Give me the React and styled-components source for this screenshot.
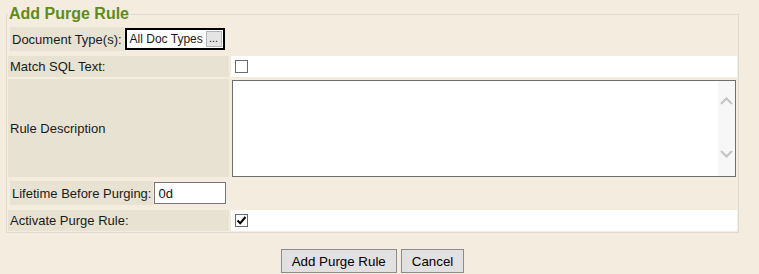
import React from "react";
import styled, { createGlobalStyle } from "styled-components";

const GlobalStyle = createGlobalStyle`
  html, body {
    margin: 0;
    padding: 0;
    background: #f4eddf;
  }
  body {
    font-family: "Liberation Sans", Arial, sans-serif;
    font-size: 13px;
    color: #1a1a1a;
  }
`;

const Page = styled.div`
  width: 759px;
  height: 274px;
  overflow: hidden;
`;

const Fieldset = styled.fieldset`
  margin: 5px 20px 0 6px;
  padding: 2px 1px 1px 1px;
  border: 1px solid #dedad2;
  min-width: 0;
`;

const Legend = styled.legend`
  padding: 0 1px;
  margin: 0;
  font-family: "Liberation Sans", Arial, sans-serif;
  font-weight: bold;
  font-size: 16px;
  line-height: 18px;
  color: #5e8b1e;
`;

const FormGrid = styled.div`
  display: grid;
  grid-template-columns: 221px 506px;
  column-gap: 2px;
  row-gap: 2px;
`;

const NestedRow = styled.div`
  grid-column: 1 / span 2;
  display: flex;
  align-items: center;
  gap: 1px;
  padding: 2px 2px 3px 2px;
`;

const LabelCell = styled.div`
  display: flex;
  align-items: center;
  padding: 0 2px;
  background: #e8e2d3;
  height: ${(p) => p.$h}px;
  white-space: nowrap;
`;

const ValueCell = styled.div`
  display: flex;
  align-items: center;
  background: ${(p) => (p.$white ? "#ffffff" : "transparent")};
  padding: ${(p) => p.$pad || "0"};
  height: ${(p) => p.$h}px;
  box-sizing: border-box;
`;

const PickerBox = styled.div`
  display: flex;
  align-items: center;
  justify-content: space-between;
  width: 100px;
  height: 22px;
  box-sizing: border-box;
  border: 2px solid #000;
  background: #fff;
  padding: 0 1px 0 3px;
  font-size: 12px;
  white-space: nowrap;
`;

const SmallButton = styled.button`
  width: 16px;
  height: 16px;
  padding: 0 0 3px 0;
  margin: 0;
  border: 1px solid #b4b4b4;
  background: #e4e4e4;
  font-family: "Liberation Sans", Arial, sans-serif;
  font-size: 11px;
  line-height: 10px;
  color: #111;
  display: flex;
  align-items: flex-end;
  justify-content: center;
  box-sizing: border-box;
  flex-shrink: 0;
`;

const TextInput = styled.input`
  width: 72px;
  height: 22px;
  box-sizing: border-box;
  border: 1px solid #767676;
  padding: 0 3px;
  margin: 0;
  font-family: "Liberation Sans", Arial, sans-serif;
  font-size: 13px;
  color: #111;
  background: #fff;
  outline: none;
`;

const CheckWrap = styled.label`
  display: inline-flex;
  margin-left: 4px;
  width: 13px;
  height: 13px;
  box-sizing: border-box;
  border: 1px solid #6b6b6b;
  background: #fff;
  align-items: center;
  justify-content: center;
  input {
    position: absolute;
    opacity: 0;
    width: 0;
    height: 0;
    margin: 0;
  }
`;

const TextareaBox = styled.div`
  display: flex;
  width: 504px;
  height: 97px;
  box-sizing: border-box;
  border: 1px solid #6e6e6e;
  background: #fff;
`;

const TextArea = styled.textarea`
  flex: 1;
  border: none;
  outline: none;
  resize: none;
  overflow: hidden;
  margin: 0;
  padding: 2px;
  font-family: "Liberation Sans", Arial, sans-serif;
  font-size: 13px;
  background: transparent;
`;

const ScrollTrack = styled.div`
  width: 17px;
  background: #f7f7f7;
  display: flex;
  flex-direction: column;
  justify-content: space-between;
  align-items: center;
  padding: 16px 0 18px;
  box-sizing: border-box;
`;

const ButtonBar = styled.div`
  margin: 16px 20px 0 6px;
  display: flex;
  justify-content: center;
  gap: 4px;
`;

const ActionButton = styled.button`
  height: 24px;
  padding: 0 10px;
  margin: 0;
  border: 1px solid #8c8c8c;
  background: #e1e1e1;
  font-family: "Liberation Sans", Arial, sans-serif;
  font-size: 13.333px;
  color: #000;
  box-sizing: border-box;
`;

const Chevron = ({ up }) => (
  <svg width="13" height="8" viewBox="0 0 13 8">
    <path
      d={up ? "M1 7 L6.5 1.5 L12 7" : "M1 1 L6.5 6.5 L12 1"}
      fill="none"
      stroke="#c3c3c3"
      strokeWidth="2"
    />
  </svg>
);

const Checkbox = ({ checked }) => (
  <CheckWrap>
    <input type="checkbox" defaultChecked={checked} />
    {checked && (
      <svg width="11" height="11" viewBox="0 0 11 11">
        <path d="M1.5 5.5 L4.2 8.2 L9.5 2" fill="none" stroke="#000" strokeWidth="2" />
      </svg>
    )}
  </CheckWrap>
);

export default function App() {
  return (
    <Page>
      <GlobalStyle />
      <Fieldset>
        <Legend>Add Purge Rule</Legend>
        <FormGrid>
          <NestedRow>
            <LabelCell $h={24}>Document Type(s):</LabelCell>
            <PickerBox>
              <span>All Doc Types</span>
              <SmallButton type="button">...</SmallButton>
            </PickerBox>
          </NestedRow>

          <LabelCell $h={21}>Match SQL Text:</LabelCell>
          <ValueCell $white $h={21}>
            <Checkbox />
          </ValueCell>

          <LabelCell $h={98}>Rule Description</LabelCell>
          <ValueCell $h={98} $pad="1px">
            <TextareaBox>
              <TextArea />
              <ScrollTrack>
                <Chevron up />
                <Chevron />
              </ScrollTrack>
            </TextareaBox>
          </ValueCell>

          <NestedRow>
            <LabelCell $h={24}>Lifetime Before Purging:</LabelCell>
            <TextInput defaultValue="0d" />
          </NestedRow>

          <LabelCell $h={21}>Activate Purge Rule:</LabelCell>
          <ValueCell $white $h={21}>
            <Checkbox checked />
          </ValueCell>
        </FormGrid>
      </Fieldset>
      <ButtonBar>
        <ActionButton type="button">Add Purge Rule</ActionButton>
        <ActionButton type="button">Cancel</ActionButton>
      </ButtonBar>
    </Page>
  );
}
